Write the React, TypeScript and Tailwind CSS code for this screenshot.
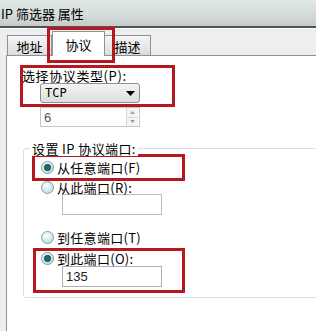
import React from 'react';

const RED = 'border-[#b5191f]';

const Radio: React.FC<{ checked?: boolean }> = ({ checked }) => (
  <svg width="13" height="13" viewBox="0 0 13 13" className="shrink-0">
    <defs>
      <radialGradient id={checked ? 'rc' : 'ru'} cx="40%" cy="35%" r="70%">
        <stop offset="0%" stopColor="#ffffff" />
        <stop offset="100%" stopColor="#b9dde6" />
      </radialGradient>
    </defs>
    <circle cx="6.5" cy="6.5" r="6" fill={`url(#${checked ? 'rc' : 'ru'})`} stroke="#8a9aa0" />
    {checked && <circle cx="6.5" cy="6.5" r="3.2" fill="#1f6b6b" stroke="#134848" strokeWidth="0.8" />}
  </svg>
);

const Field: React.FC<{ value?: string }> = ({ value }) => (
  <div className="w-[100px] h-[21px] border border-[#a9b0b8] bg-white flex items-center pl-[3px] text-[13px] text-[#222] font-['Liberation_Sans',sans-serif]">
    {value}
  </div>
);

export default function App() {
  const cjk = "font-['Noto_Sans_CJK_SC','Noto_Sans',sans-serif]";
  return (
    <div className={`relative w-[316px] h-[331px] overflow-hidden bg-[#eeeeee] text-black ${cjk}`}>
      {/* title bar */}
      <div className="h-[26px] bg-gradient-to-b from-[#dfe9e6] via-[#d6dedc] to-[#c7cccb] flex items-center text-[13px] leading-none pl-[1px]">
        IP 筛选器 属性
      </div>
      <div className="h-[2px] bg-[#4f5455]" />
      <div className="h-[1px] bg-white" />

      {/* tabs */}
      <div className="flex items-end h-[26px] pl-[7px] text-[13px] leading-none">
        <div className="w-[45px] h-[20px] border border-b-0 border-[#8e9196] bg-gradient-to-b from-[#f6f6f6] to-[#dcdcdc] flex items-center justify-center pt-[2px]">
          地址
        </div>
        <div className="w-[53px] h-[25px] border border-b-0 border-[#8e9196] bg-white flex items-start justify-center pt-[6px] -mb-[1px] relative z-10">
          协议
        </div>
        <div className="w-[46px] h-[20px] border border-b-0 border-l-0 border-[#8e9196] bg-gradient-to-b from-[#f6f6f6] to-[#dcdcdc] flex items-center justify-center pt-[2px]">
          描述
        </div>
      </div>

      {/* panel */}
      <div className="ml-[6px] h-[280px] border-l border-t border-[#8e9196] bg-white text-[13px] leading-none">
        <div className={`mt-[9px] ml-[13px] w-[155px] h-[42px] border-[3px] ${RED}`}>
          <div className="h-[15px] -ml-[1px] flex items-center tracking-[0.6px]">选择协议类型(P):</div>
          <div className="ml-[17px] w-[100px] h-[20px] rounded-[3px] border border-[#8e8f8f] bg-gradient-to-b from-[#f4f4f4] to-[#dddddd] flex items-center justify-between pl-[4px] pr-[4px]">
            <span className="font-['DejaVu_Sans_Mono',monospace] text-[12px]">TCP</span>
            <svg width="9" height="5" viewBox="0 0 9 5"><path d="M0 0h9L4.5 5z" fill="#000" /></svg>
          </div>
        </div>
        <div className="ml-[33px] w-[100px] h-[20px] border border-[#c2c6cc] bg-white flex items-center justify-between pl-[3px] text-[#555] font-['Liberation_Sans',sans-serif]">
          <span>6</span>
          <div className="flex flex-col w-[12px] h-[18px] border-l border-[#d5d9de] mr-[1px]">
            <div className="flex-1 flex items-center justify-center border-b border-[#d5d9de] bg-[#f4f4f4]">
              <svg width="5" height="3" viewBox="0 0 5 3"><path d="M0 3h5L2.5 0z" fill="#9aa0a6" /></svg>
            </div>
            <div className="flex-1 flex items-center justify-center bg-[#f4f4f4]">
              <svg width="5" height="3" viewBox="0 0 5 3"><path d="M0 0h5L2.5 3z" fill="#9aa0a6" /></svg>
            </div>
          </div>
        </div>

        {/* group box */}
        <div className="relative mt-[21px] ml-[16px] w-[320px] h-[150px] rounded-[3px] border border-[#d5dfe5]">
          <div className="absolute -top-[8px] left-[6px] bg-white px-[2px] h-[15px] flex items-center tracking-[0.4px]">设置 IP 协议端口:</div>
          <div className={`mt-[5px] ml-[8px] w-[153px] h-[27px] border-[3px] ${RED} flex items-center gap-[3px] pl-[6px]`}>
            <Radio checked />
            <span className="tracking-[0.3px]">从任意端口(F)</span>
          </div>
          <div className="ml-[17px] h-[13px] flex items-center gap-[3px]">
            <Radio />
            <span className="tracking-[0.3px]">从此端口(R):</span>
          </div>
          <div className="ml-[38px]">
            <div className="w-[100px] h-[21px] border border-[#b8bec4] bg-white" />
          </div>
          <div className="mt-[15px] ml-[17px] h-[14px] flex items-center gap-[3px]">
            <Radio />
            <span className="tracking-[0.3px]">到任意端口(T)</span>
          </div>
          <div className={`mt-[4px] ml-[9px] w-[152px] h-[45px] border-[3px] ${RED}`}>
            <div className="h-[14px] flex items-center gap-[3px] pl-[5px]">
              <Radio checked />
              <span className="tracking-[0.3px]">到此端口(O):</span>
            </div>
            <div className="mt-[1px] ml-[26px]">
              <Field value="135" />
            </div>
          </div>
        </div>
      </div>

      {/* annotation around selected tab */}
      <div className={`absolute left-[47px] top-[27px] w-[68px] h-[36px] border-[3px] ${RED}`} />
    </div>
  );
}
